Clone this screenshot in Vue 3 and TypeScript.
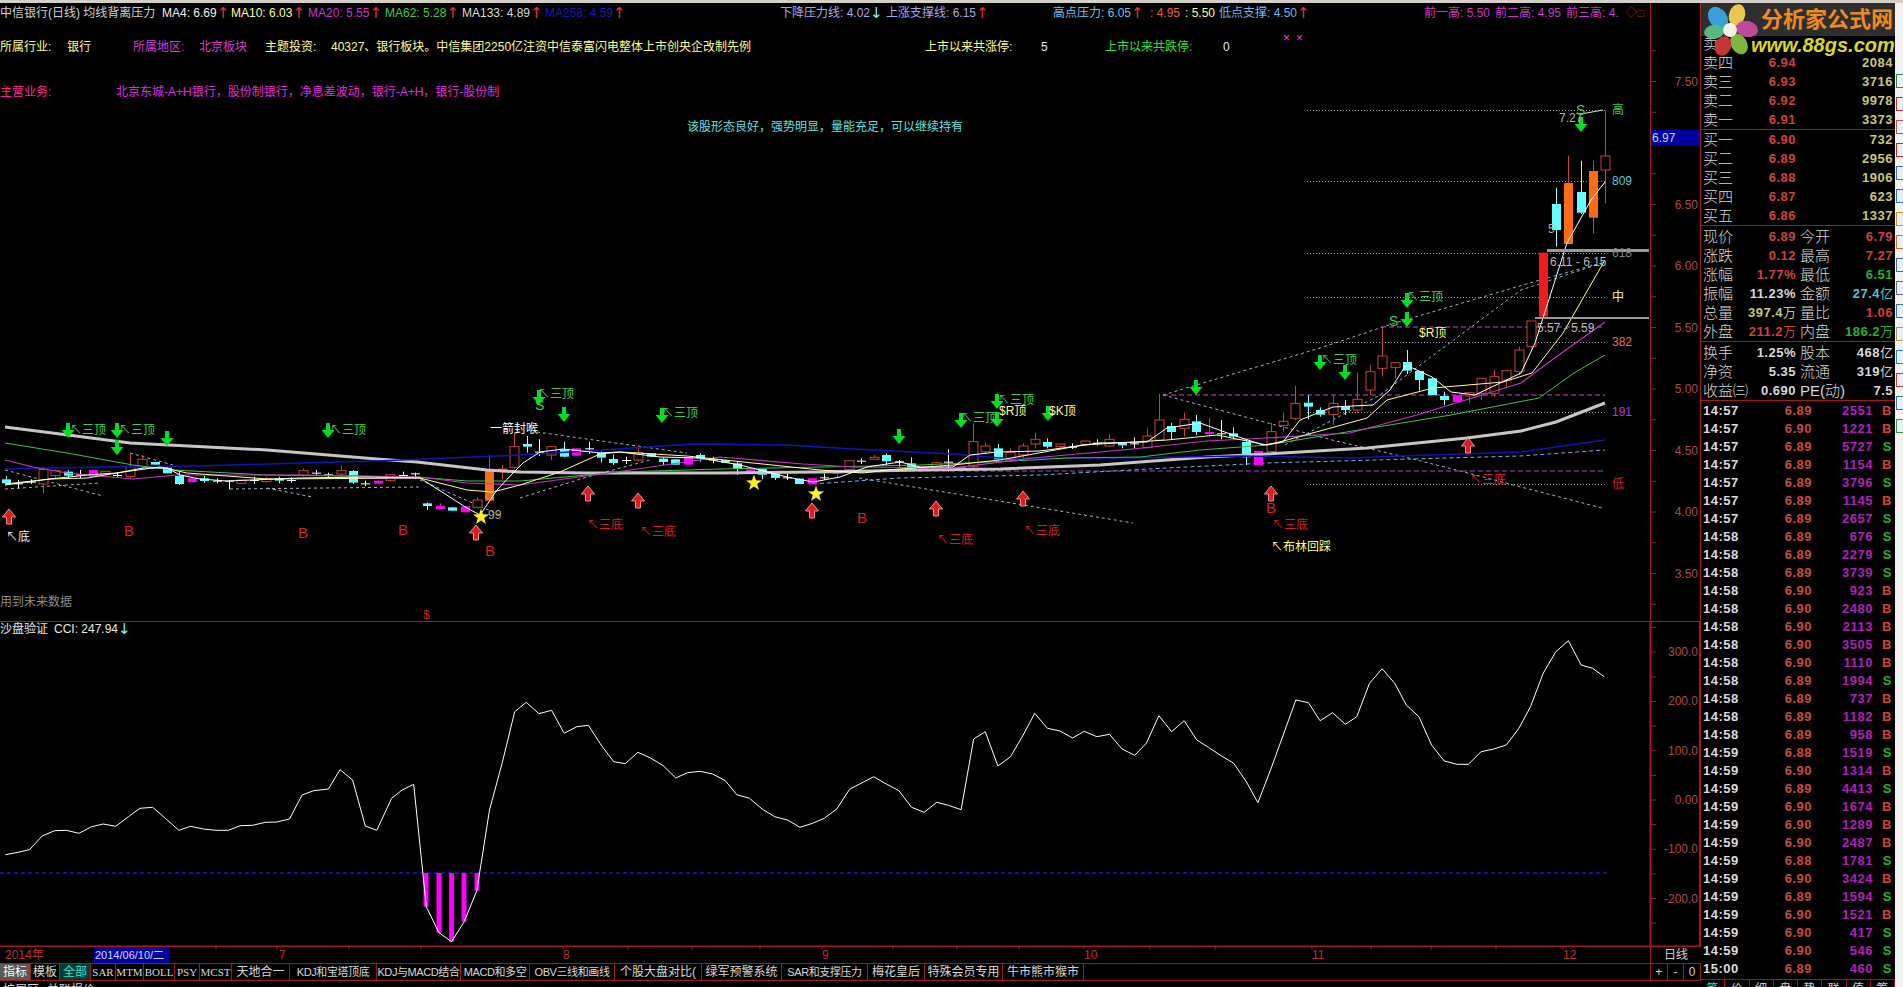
<script setup lang="ts">
type Raw = [string, number, number, number?, number?]

const CJK = '"Liberation Sans", "Noto Sans CJK SC", "DejaVu Sans", sans-serif'

// 蜡烛数据：每组用同一个 y 基准，数值是读图时的 3 倍刻度
const group1: Raw[] = [
  ['d',178,190,168,195],['x',190,190,180,205],['x',185,185,178,192],['u',148,192,140,220],['u',152,167,148,175],
  ['d',155,167,150,175],['x',163,163,150,175],['m',150,170],['u',154,162,154,165],['x',165,165,158,170],
  ['u',140,170,100,175],['u',118,140,105,148],['d',126,134],['d',143,160,138,160],['d',168,192,155,195],
  ['m',175,186],['d',175,183,168,188],['x',182,182,175,190],['x',182,182,180,208],['u',180,190],
  ['x',180,180,170,192],['u',176,185,170,188],['d',176,182,170,190],['x',180,180,172,188],['u',152,166,145,170],
  ['x',158,158,150,165],['x',163,163,158,172],['u',152,162,136,170],['d',153,188,150,192],['x',190,190,182,198],
  ['m',182,191],['u',164,182,162,185],['x',165,165,155,172],['x',160,160,158,175],['d',250,258,247,270],
  ['m',258,267,250,267],['d',262,272],['m',259,277],['u',240,262,232,265],['o',152,242,105,242],
  ['u',147,150,135,178],['u',80,142,40,148],
  ['d',72,80,48,98],['x',95,95,58,108],['u',80,105,78,120],['d',88,110,65,112],['m',85,107],
  ['x',85,85,65,102],['d',98,113,95,128],['d',117,129,103,135],['x',120,120,110,132],['u',98,120,75,125],
  ['d',100,110],['d',116,126,112,135],['d',118,134],['m',113,134],['d',105,115,100,125],
  ['x',118,118,110,130],['d',120,128],['d',130,146,125,165],['m',148,156],['d',147,164,145,178],
  ['d',160,174,155,180],['x',172,172,162,180],['d',176,192],['m',175,193],['x',172,172,160,180],
  ['u',152,160,152,170],['u',122,148],['x',122,122,115,132],['u',112,118,105,118],['d',105,124,100,135],
  ['x',124,124,120,140],['d',130,146,112,148],['m',142,154],['u',128,146],['x',125,125,88,155],
  ['m',140,147],['u',65,140,10,145],['u',78,95,68,100],['d',85,118,72,120],['u',97,118,85,125],
  ['u',78,105,70,120],['u',58,72,38,85],
]
const group2: Raw[] = [
  ['d',186,200,175,205],['u',192,200,192,205],['x',200,200,190,207],['u',183,193],['x',188,188,178,196],
  ['u',178,198,163,200],['d',188,196,188,205],['x',190,190,172,205],['u',168,203,145,205],['u',120,180,42,182],
  ['d',138,156,128,178],['u',118,145,98,170],['d',124,156,105,165],['m',156,162,113,170],['x',160,160,120,178],
  ['d',160,170,142,178],['d',186,232,180,255],['m',213,255],['u',155,215,128,218],['u',124,136,98,155],
  ['u',70,115,18,120],['d',68,80,46,118],['d',90,104,82,110],['u',70,104,45,135],['d',78,90,60,105],
]
const group3: Raw[] = [
  ['u',928,960,848,970],['u',845,900,825,915],['u',798,835,712,860],['u',818,832,818,865],['d',816,842,780,852],
  ['d',843,870,843,902],['d',865,915],['d',918,930,905,945],['m',916,936],['u',908,918,908,940],
  ['u',865,910,865,930],['u',860,910,838,920],['u',842,870,842,890],['u',780,845,770,855],['u',693,770,693,775],
  ['r',488,680],['d',342,420,293,470],['o',279,462,197,462],['d',306,368,212,372],['o',243,383,212,430],
  ['u',198,240,62,340],
]

const bodyColor: Record<string, string> = {
  u: '#000', d: '#66ffff', m: '#ff00ff', o: '#ff6a14', r: '#f01c1c', x: '#fff',
}
const wickColor: Record<string, string> = {
  u: '#c8433a', d: '#9ff', m: '#c8433a', o: '#c8433a', r: '#f01c1c', x: '#fff',
}

const toBars = (list: Raw[], base: number, start: number) =>
  list.map(([t, top, bot, hi, lo], i) => {
    const x = Math.round(5.7 + 12.4 * (start + i)) + 0.5
    const y1 = base + top / 3
    const y2 = base + bot / 3
    const h1 = base + (hi ?? top) / 3
    const h2 = base + (lo ?? bot) / 3
    return {
      key: start + i,
      wick: `M${x} ${h1}V${y1}M${x} ${y2}V${h2}M${x} ${y1}V${y2}`,
      wickColor: wickColor[t],
      x: x - 4.5,
      y: y1,
      w: 9,
      h: t === 'x' ? 1 : Math.max(y2 - y1, 1),
      fill: bodyColor[t],
      stroke: t === 'u' ? '#c8433a' : 'none',
    }
  })

const bars = [...toBars(group1, 420, 0), ...toBars(group2, 380, 84), ...toBars(group3, 90, 109)]

const maLines = [
  { c: '#c6c6c6', w: 3, p: '5,427 68,435 130,443 267,450 377,459 417,462 487,470 520,472 587,473 720,473 820,472 920,470 1000,469 1100,465 1207,457 1267,454 1367,448 1467,438 1521,431 1556,422 1605,403' },
  { c: '#1414b4', w: 1.5, p: '5,469 100,467 200,466 300,463 377,461 520,455 603,450 693,444 787,445 853,449 953,454 1000,458 1127,458 1240,456 1353,458 1400,456 1521,452 1605,440' },
  { c: '#3fc04a', w: 1, p: '5,443 67,453 133,465 173,470 267,475 417,477 467,481 520,481 620,472 720,469 820,467 920,465 1033,460 1067,458 1140,457 1200,450 1267,445 1328,435 1451,415 1539,398 1574,373 1605,355' },
  { c: '#c238c2', w: 1.2, p: '5,460 33,467 67,473 100,476 133,479 177,475 300,475 420,477 467,483 520,485 630,470 720,457 803,464 853,467 953,468 1033,458 1133,449 1207,441 1267,438 1350,433 1417,415 1521,383 1556,357 1605,322' },
  { c: '#ffff9a', w: 1, p: '5,485 50,479 87,478 123,472 160,467 187,473 267,479 420,478 467,490 493,492 520,485 560,472 600,454 620,452 687,456 753,463 820,470 863,473 887,470 953,465 1000,460 1083,445 1167,440 1217,435 1267,445 1287,440 1367,418 1387,400 1433,388 1503,382 1532,373 1563,333 1605,260' },
  { c: '#fff', w: 1, p: '5,484 50,479 87,475 117,473 143,468 167,468 180,475 200,479 227,481 300,478 367,477 420,478 467,508 480,515 497,490 513,473 523,463 540,452 563,449 600,453 620,452 660,457 700,458 740,465 787,477 813,482 840,477 867,467 900,462 920,467 953,467 970,455 997,452 1040,451 1100,443 1147,442 1167,428 1200,423 1233,435 1263,445 1283,442 1300,420 1333,407 1373,405 1390,390 1406,365 1432,377 1451,392 1475,395 1521,373 1535,343 1567,243 1591,200 1605,182' },
]

const dashLines = [
  { c: '#8fb8c8', d: '3 3', p: '1163,395 1320,348 1395,323 1540,280 1605,262' },
  { c: '#8fb8c8', d: '3 3', p: '1285,445 1380,395 1451,342 1521,290 1605,262' },
  { c: '#9cb4c8', d: '3 3', p: '1163,395 1268,423 1332,440 1409,458 1468,473 1521,487 1602,508' },
  { c: '#d040d0', d: '5 3', p: '1163,395 1605,395' },
  { c: '#d040d0', d: '5 3', p: '1381,327 1605,327' },
  { c: '#a848d0', d: '5 3', p: '870,471 1605,471' },
  { c: '#6cb4e4', d: '4 3', p: '813,484 900,478 1040,475 1167,468 1267,463 1520,456 1605,450' },
  { c: '#9cb4c8', d: '3 3', p: '859,478 1133,523' },
  { c: '#9cb4c8', d: '3 3', p: '537,432 687,453' },
  { c: '#9cb4c8', d: '3 3', p: '5,470 103,496' },
  { c: '#9cb4c8', d: '3 3', p: '267,488 312,497' },
  { c: '#9cb4c8', d: '3 3', p: '130,453 173,465' },
  { c: '#9cb4c8', d: '3 3', p: '230,489 420,487' },
  { c: '#9cb4c8', d: '3 3', p: '420,480 500,515' },
  { c: '#9cb4c8', d: '3 3', p: '5,489 100,483' },
  { c: '#9cb4c8', d: '3 3', p: '520,498 587,477 650,460' },
]

const fibY = [110, 181, 253, 297, 342, 412, 484]

const greenArrows = [
  [68,431],[117,431],[117,448],[167,439],[328,431],[539,398],[564,415],[662,416],[899,437],[961,421],
  [997,402],[997,420],[1048,414],[1196,388],[1320,363],[1345,373],[1407,301],[1407,320],[1581,125],
]
const redArrows = [[9,516],[476,532],[588,493],[638,500],[812,510],[936,508],[1023,498],[1271,493],[1468,445]]
const stars = [[754,483],[816,494],[481,517]]

const starPoints = Array.from({ length: 10 }, (_, i) => {
  const r = i % 2 ? 3.4 : 8.5
  const a = (Math.PI / 5) * i - Math.PI / 2
  return `${(r * Math.cos(a)).toFixed(1)},${(r * Math.sin(a)).toFixed(1)}`
}).join(' ')

const GREEN = '#3ad24a'
const RED = '#d82020'
const YELLOW = '#ffff80'
const MAG = '#c838c8'

const chartTexts: { x: number; y: number; t: string; c: string; s?: number; arrow?: string; ac?: string }[] = [
  { x: 0, y: 13, t: '中信银行(日线) 均线背离压力', c: '#d0d0d0' },
  { x: 162, y: 13, t: 'MA4: 6.69', c: '#f0f0f0', arrow: '↑', ac: '#f03030' },
  { x: 231, y: 13, t: 'MA10: 6.03', c: '#ffff9a', arrow: '↑', ac: '#f03030' },
  { x: 308, y: 13, t: 'MA20: 5.55', c: MAG, arrow: '↑', ac: '#f03030' },
  { x: 385, y: 13, t: 'MA62: 5.28', c: '#3fd04a', arrow: '↑', ac: '#f03030' },
  { x: 462, y: 13, t: 'MA133: 4.89', c: '#d8d8d8', arrow: '↑', ac: '#f03030' },
  { x: 545, y: 13, t: 'MA258: 4.59', c: '#1a1ab8', arrow: '↑', ac: '#f03030' },
  { x: 780, y: 13, t: '下降压力线: 4.02', c: '#a8a8e8', arrow: '↓', ac: '#66ffff' },
  { x: 886, y: 13, t: '上涨支撑线: 6.15', c: '#a8a8e8', arrow: '↑', ac: '#f03030' },
  { x: 1053, y: 13, t: '高点压力: 6.05', c: '#6cc4ee', arrow: '↑', ac: '#f03030' },
  { x: 1150, y: 13, t: ': 4.95', c: '#e86048' },
  { x: 1185, y: 13, t: ': 5.50', c: '#ffff9a' },
  { x: 1219, y: 13, t: '低点支撑: 4.50', c: '#78b4f0', arrow: '↑', ac: '#f03030' },
  { x: 1424, y: 13, t: '前一高: 5.50', c: MAG },
  { x: 1495, y: 13, t: '前二高: 4.95', c: MAG },
  { x: 1566, y: 13, t: '前三高: 4.', c: MAG },
  { x: 1625, y: 13, t: '◇', c: '#a02020' },
  { x: 1637, y: 13, t: '□', c: '#a02020' },
  { x: 0, y: 47, t: '所属行业:', c: YELLOW },
  { x: 67, y: 47, t: '银行', c: YELLOW },
  { x: 133, y: 47, t: '所属地区:', c: '#d040d0' },
  { x: 199, y: 47, t: '北京板块', c: '#d040d0' },
  { x: 265, y: 47, t: '主题投资:', c: YELLOW },
  { x: 331, y: 47, t: '40327、银行板块。中信集团2250亿注资中信泰富闪电整体上市创央企改制先例', c: YELLOW },
  { x: 925, y: 47, t: '上市以来共涨停:', c: YELLOW },
  { x: 1041, y: 47, t: '5', c: '#e8e8e8' },
  { x: 1105, y: 47, t: '上市以来共跌停:', c: '#30e040' },
  { x: 1223, y: 47, t: '0', c: '#e8e8e8' },
  { x: 1283, y: 38, t: '×', c: '#e040e0' },
  { x: 1296, y: 38, t: '×', c: '#e040e0' },
  { x: 0, y: 92, t: '主营业务:', c: '#ff2090' },
  { x: 116, y: 92, t: '北京东城-A+H银行，股份制银行，净息差波动，银行-A+H，银行-股份制', c: '#e028e0' },
  { x: 687, y: 127, t: '该股形态良好，强势明显，量能充足，可以继续持有', c: '#60e0e0' },
  { x: 0, y: 602, t: '用到未来数据', c: '#8c8c8c' },
  { x: 1612, y: 110, t: '高', c: '#30d040' },
  { x: 1612, y: 181, t: '809', c: '#60c4d8' },
  { x: 1612, y: 253, t: '618', c: '#888' },
  { x: 1612, y: 297, t: '中', c: YELLOW },
  { x: 1612, y: 342, t: '382', c: '#e07060' },
  { x: 1612, y: 412, t: '191', c: '#a840d0' },
  { x: 1612, y: 484, t: '低', c: RED },
  { x: 1559, y: 118, t: '7.27', c: '#b0b0b0' },
  { x: 1548, y: 229, t: '5', c: '#b0b0b0' },
  { x: 1550, y: 262, t: '6.11 - 6.15', c: '#b8b8b8' },
  { x: 1537, y: 328, t: '5.57 - 5.59', c: '#b8b8b8' },
  { x: 488, y: 515, t: '99', c: '#a8a8a8' },
  { x: 6, y: 537, t: '↖底', c: '#f0f0f0' },
  { x: 490, y: 429, t: '一箭封喉', c: '#ffffff' },
  { x: 1271, y: 547, t: '↖布林回踩', c: YELLOW },
  { x: 999, y: 411, t: '$R顶', c: YELLOW },
  { x: 1049, y: 411, t: '$K顶', c: YELLOW },
  { x: 1419, y: 333, t: '$R顶', c: YELLOW },
  { x: 423, y: 615, t: '$', c: RED },
  { x: 535, y: 405, t: 'S', c: GREEN, s: 14 },
  { x: 1389, y: 321, t: 'S', c: GREEN, s: 14 },
  { x: 1576, y: 110, t: 'S', c: GREEN, s: 14 },
  ...[[70,430],[119,430],[330,430],[538,394],[662,413],[961,418],[998,400],[1321,360],[1407,297]].map(([x, y]) => ({
    x, y, t: '↖三顶', c: GREEN,
  })),
  ...[[587,525],[640,532],[937,540],[1024,531],[1272,525],[1470,480]].map(([x, y]) => ({
    x, y, t: '↖三底', c: RED,
  })),
  ...[[129,530],[303,532],[403,529],[490,550],[862,517],[1271,507]].map(([x, y]) => ({
    x: x - 5, y, t: 'B', c: RED, s: 15,
  })),
]

const priceY = (p: number) => 266 + (6 - p) * 123
const priceTicks = Array.from({ length: 19 }, (_, i) => priceY(3.25 + i * 0.25))
const priceLabels = ['7.50', '6.50', '6.00', '5.50', '5.00', '4.50', '4.00', '3.50'].map(t => ({ t, y: priceY(Number(t)) }))

const cciY = (v: number) => 800 - v * 0.493
const cciTicks = Array.from({ length: 13 }, (_, i) => cciY(-250 + i * 50))
const cciLabels = [
  { t: '300.0', y: cciY(300) }, { t: '200.0', y: cciY(200) }, { t: '100.0', y: cciY(100) },
  { t: '0.00', y: cciY(0) }, { t: '-100.0', y: cciY(-100) }, { t: '-200.0', y: cciY(-200) },
]

const cciRaw = [
  5,704,17,697,28,689,40,648,52,632,63,631,75,640,87,620,98,612,110,619,122,590,133,565,145,562,157,595,170,631,181,619,
  193,627,205,631,217,631,228,617,240,616,252,607,263,606,275,597,287,525,298,512,312,507,323,449,335,480,347,618,358,631,
  372,535,382,510,393,493,405,860,417,938,429,965,441,905,453,812,465,570,477,430,489,275,500,247,512,281,524,271,536,340,
  548,320,559,316,571,375,583,425,594,431,606,397,618,414,630,437,642,474,653,458,665,454,677,462,689,482,700,524,712,535,
  724,567,736,590,748,600,760,622,772,610,783,595,795,567,807,508,818,490,830,470,842,492,854,512,866,562,878,577,890,547,
  901,556,913,569,925,357,936,335,948,438,960,410,972,345,983,280,995,325,1007,333,1019,354,1030,334,1042,350,1054,343,
  1066,387,1078,406,1089,370,1101,287,1113,335,1125,302,1137,360,1148,382,1160,407,1172,430,1184,485,1195,548,1207,450,
  1219,345,1231,240,1243,248,1254,302,1266,278,1278,313,1289,290,1301,190,1313,146,1325,190,1336,255,1348,290,1360,375,
  1372,423,1384,433,1395,433,1407,395,1419,387,1431,375,1443,325,1454,260,1466,160,1478,95,1490,62,1502,135,1513,145,1524,170,
]
const cciPoints = cciRaw
  .reduce<string[]>((acc, v, i) => {
    if (i % 2) acc.push(`${(cciRaw[i - 1] / 0.95).toFixed(1)},${(620 + v / 3).toFixed(1)}`)
    return acc
  }, [])
  .join(' ')

const cciBars = [
  [426, 860], [439, 938], [451.6, 965], [464, 905], [477, 812],
].map(([x, py]) => ({ x: x - 2.5, y: 873, h: 620 + py / 3 - 873 }))

const dateMarks = [
  { x: 279, t: '7' }, { x: 563, t: '8' }, { x: 822, t: '9' }, { x: 1084, t: '10' }, { x: 1312, t: '11' }, { x: 1563, t: '12' },
]
const dateTicks = [216, 277, 349, 421, 563, 628, 692, 760, 822, 893, 957, 1019, 1084, 1150, 1215, 1312, 1371, 1431, 1496, 1563]

const tabs = [
  { t: '指标', w: 31, cls: 'active' }, { t: '模板', w: 29 }, { t: '全部', w: 31, cls: 'all' },
  { t: 'SAR', w: 25, cls: 'small' }, { t: 'MTM', w: 28, cls: 'small' }, { t: 'BOLL', w: 31, cls: 'small' },
  { t: 'PSY', w: 25, cls: 'small' }, { t: 'MCST', w: 32, cls: 'small' }, { t: '天地合一', w: 58 },
  { t: 'KDJ和宝塔顶底', w: 87, cls: 'mixed' }, { t: 'KDJ与MACD结合', w: 84, cls: 'mixed' }, { t: 'MACD和多空', w: 69, cls: 'mixed' },
  { t: 'OBV三线和画线', w: 85, cls: 'mixed' }, { t: '个股大盘对比(', w: 87 }, { t: '绿军预警系统', w: 80 },
  { t: 'SAR和支撑压力', w: 86, cls: 'mixed' }, { t: '梅花皇后', w: 57 }, { t: '特殊会员专用', w: 78 }, { t: '牛市熊市猴市', w: 81 },
]

const sellRows = [
  ['卖四', '6.94', '2084'], ['卖三', '6.93', '3716'], ['卖二', '6.92', '9978'], ['卖一', '6.91', '3373'],
]
const buyRows = [
  ['买一', '6.90', '732'], ['买二', '6.89', '2956'], ['买三', '6.88', '1906'], ['买四', '6.87', '623'], ['买五', '6.86', '1337'],
]
const statRows = [
  { a: '现价', v: '6.89', vc: 'red', b: '今开', w: '6.79', wc: 'red' },
  { a: '涨跌', v: '0.12', vc: 'red', b: '最高', w: '7.27', wc: 'red' },
  { a: '涨幅', v: '1.77%', vc: 'red', b: '最低', w: '6.51', wc: 'green' },
  { a: '振幅', v: '11.23%', vc: 'white', b: '金额', w: '27.4', wu: '亿', wc: 'cyan' },
  { a: '总量', v: '397.4', vu: '万', vc: 'olive', b: '量比', w: '1.06', wc: 'red' },
  { a: '外盘', v: '211.2', vu: '万', vc: 'red', b: '内盘', w: '186.2', wu: '万', wc: 'green' },
]
const finRows = [
  { a: '换手', v: '1.25%', b: '股本', w: '468', wu: '亿' },
  { a: '净资', v: '5.35', b: '流通', w: '319', wu: '亿' },
  { a: '收益㈢', v: '0.690', b: 'PE(动)', w: '7.5' },
]

const trades = `14:57 6.89 2551 B,14:57 6.90 1221 B,14:57 6.89 5727 S,14:57 6.89 1154 B,14:57 6.89 3796 S,14:57 6.89 1145 B,14:57 6.89 2657 S,14:58 6.89 676 S,14:58 6.89 2279 S,14:58 6.89 3739 S,14:58 6.90 923 B,14:58 6.90 2480 B,14:58 6.90 2113 B,14:58 6.90 3505 B,14:58 6.90 1110 B,14:58 6.89 1994 S,14:58 6.89 737 B,14:58 6.89 1182 B,14:58 6.89 958 B,14:59 6.88 1519 S,14:59 6.90 1314 B,14:59 6.89 4413 S,14:59 6.90 1674 B,14:59 6.90 1289 B,14:59 6.90 2487 B,14:59 6.88 1781 S,14:59 6.90 3424 B,14:59 6.89 1594 S,14:59 6.90 1521 B,14:59 6.90 417 S,14:59 6.90 546 S,15:00 6.89 460 S`
  .split(',')
  .map(s => s.split(' '))

const panelTabs = ['笔', '价', '细', '盘', '势', '联', '值', '筹']
const toolIcons = ['#2a8a3a', '#c03030', '#c05040', '#d02020', '#4070b0', '#3070b0', '#d09030', '#d07030', '#3070b0', '#607080', '#3070c0', '#b09060', '#3080d0', '#c04030', '#3070b0', '#30a040']
</script>

<template>
  <div class="screen">
    <div class="top-bar"></div>

    <div class="left">
      <!-- 主图 -->
      <svg class="chart main-chart" viewBox="0 3 1701 618" width="1701" height="618">
        <line v-for="y in fibY" :key="y" x1="1307" x2="1605" :y1="y + 0.5" :y2="y + 0.5" stroke="#9a9a9a" stroke-dasharray="1 2" />
        <polyline v-for="(l, i) in dashLines" :key="i" :points="l.p" fill="none" :stroke="l.c" :stroke-dasharray="l.d" />

        <g v-for="b in bars" :key="b.key">
          <path :d="b.wick" :stroke="b.wickColor" fill="none" />
          <rect :x="b.x" :y="b.y" :width="b.w" :height="b.h" :fill="b.fill" :stroke="b.stroke" />
        </g>

        <polyline v-for="(l, i) in maLines" :key="i" :points="l.p" fill="none" :stroke="l.c" :stroke-width="l.w" />

        <rect x="1547" y="249" width="102" height="3" fill="#999" />
        <rect x="1535" y="317" width="114" height="2" fill="#999" />
        <line x1="1581" y1="114" x2="1603" y2="110" stroke="#ddd" />

        <path
          v-for="(a, i) in greenArrows" :key="i"
          :transform="`translate(${a[0]} ${a[1]})`"
          d="M-2 -8h4v7h4.500L0 7-6.500 -1H-2z"
          fill="#00e020"
        />
        <path
          v-for="(a, i) in redArrows" :key="i"
          :transform="`translate(${a[0]} ${a[1]})`"
          d="M-2.500 8h5v-7h4L0 -7-6.500 1h4z"
          fill="#e01c1c" stroke="#f09090"
        />
        <polygon
          v-for="(s, i) in stars" :key="i"
          :transform="`translate(${s[0]} ${s[1]})`"
          :points="starPoints"
          fill="#ffee20"
        />

        <text
          v-for="(t, i) in chartTexts" :key="i"
          class="chart-text" :x="t.x" :y="t.y" :fill="t.c" :font-size="t.s ?? 12" dominant-baseline="central" :font-family="CJK"
        >{{ t.t }}<tspan v-if="t.arrow" class="head-arrow" :fill="t.ac">{{ t.arrow }}</tspan></text>

        <line x1="1650.5" x2="1650.5" y1="3" y2="621" class="axis-line" />
        <line x1="1700.5" x2="1700.5" y1="3" y2="621" class="axis-line" />
        <line v-for="y in priceTicks" :key="y" x1="1650" x2="1656" :y1="y" :y2="y" class="axis-line" />
        <text
          v-for="l in priceLabels" :key="l.t"
          class="axis-text" x="1698" :y="l.y" text-anchor="end" dominant-baseline="central"
        >{{ l.t }}</text>
        <rect x="1651" y="130" width="49" height="16" fill="#0000a0" />
        <text x="1652" y="138" class="cur-price" dominant-baseline="central">6.97</text>
      </svg>

      <!-- 副图 CCI -->
      <svg class="chart" viewBox="0 621 1701 326" width="1701" height="326">
        <line x1="0" x2="1700" y1="621" y2="621" class="panel-line" />
        <line x1="0" x2="1700" y1="946.500" y2="946.500" class="panel-line" />
        <line x1="1650.500" x2="1650.500" y1="621" y2="947" class="panel-line" />
        <line x1="1700" x2="1700" y1="621" y2="947" class="panel-line" />
        <line x1="0" x2="1610" y1="873" y2="873" stroke="#1818d0" stroke-width="1.500" stroke-dasharray="4 3" />
        <rect v-for="b in cciBars" :key="b.x" :x="b.x" :y="b.y" width="5" :height="b.h" fill="#ff00ff" />
        <polyline :points="cciPoints" fill="none" stroke="#fff" />
        <text class="chart-text" x="0" y="629" fill="#e8e8e8" font-size="12" dominant-baseline="central" :font-family="CJK">沙盘验证</text>
        <text class="chart-text" x="54" y="629" fill="#e8e8e8" font-size="12" dominant-baseline="central" :font-family="CJK">CCI: 247.94<tspan class="head-arrow" fill="#66ffff">↓</tspan></text>
        <line v-for="y in cciTicks" :key="y" x1="1650" x2="1656" :y1="y" :y2="y" class="axis-line" />
        <text
          v-for="l in cciLabels" :key="l.t"
          class="axis-text" x="1698" :y="l.y" text-anchor="end" dominant-baseline="central"
        >{{ l.t }}</text>
      </svg>

      <!-- 时间轴 -->
      <div class="date-row">
        <svg class="chart" viewBox="0 0 1650 16" width="1650" height="16">
          <text class="date-text" x="5" y="8" dominant-baseline="central" :font-family="CJK">2014年</text>
          <line v-for="x in dateTicks" :key="x" :x1="x" :x2="x" y1="0" y2="3" class="axis-line" />
          <rect x="94" y="0" width="76" height="16" fill="#0000a0" />
          <text x="95" y="8" class="date-cur" dominant-baseline="central" :font-family="CJK">2014/06/10/二</text>
          <text
            v-for="m in dateMarks" :key="m.t"
            class="date-text" :x="m.x" y="8" dominant-baseline="central"
          >{{ m.t }}</text>
        </svg>
        <div class="period">日线</div>
      </div>

      <div class="tab-row">
        <div class="tabs">
          <div
            v-for="t in tabs" :key="t.t"
            class="tab" :class="t.cls"
            :style="{ width: t.w + 'px' }"
          >{{ t.t }}</div>
        </div>
        <div class="zoom-btns">
          <span>+</span><span>-</span><span>0</span>
        </div>
      </div>

      <div class="extra-row">
        <span>扩展区</span><span>关联报价</span>
      </div>
    </div>

    <!-- 右侧盘口 -->
    <div class="panel">
      <div class="logo">
        <svg class="logo-flower" viewBox="0 0 56 54" width="56" height="54">
          <ellipse cx="15" cy="15" rx="9" ry="12" fill="#3a9ed8" transform="rotate(-35 15 15)" />
          <ellipse cx="34" cy="12" rx="8" ry="11" fill="#e8c850" transform="rotate(15 34 12)" />
          <ellipse cx="44" cy="26" rx="11" ry="8" fill="#c04a9a" transform="rotate(10 44 26)" />
          <ellipse cx="36" cy="41" rx="8" ry="11" fill="#7cb840" transform="rotate(-30 36 41)" />
          <ellipse cx="20" cy="43" rx="8" ry="10" fill="#c83434" transform="rotate(20 20 43)" />
          <ellipse cx="11" cy="29" rx="10" ry="7" fill="#58b880" transform="rotate(-5 11 29)" />
          <circle cx="27" cy="27" r="7" fill="#f4f4e8" />
        </svg>
        <div class="logo-band">
          <span class="logo-name">分析家公式网</span>
        </div>
        <div class="logo-url">www.88gs.com</div>
      </div>

      <div class="block sell">
        <div class="q-row hidden-row"><span class="lb">卖</span></div>
        <div v-for="r in sellRows" :key="r[0]" class="q-row">
          <span class="lb">{{ r[0] }}</span><span class="val red">{{ r[1] }}</span>
          <span class="lb2"></span><span class="val olive">{{ r[2] }}</span>
        </div>
      </div>
      <div class="block">
        <div v-for="r in buyRows" :key="r[0]" class="q-row">
          <span class="lb">{{ r[0] }}</span><span class="val red">{{ r[1] }}</span>
          <span class="lb2"></span><span class="val olive">{{ r[2] }}</span>
        </div>
      </div>
      <div class="block pad">
        <div v-for="r in statRows" :key="r.a" class="q-row">
          <span class="lb">{{ r.a }}</span>
          <span class="val" :class="r.vc">{{ r.v }}<i v-if="r.vu" class="unit">{{ r.vu }}</i></span>
          <span class="lb2">{{ r.b }}</span>
          <span class="val" :class="r.wc">{{ r.w }}<i v-if="r.wu" class="unit">{{ r.wu }}</i></span>
        </div>
      </div>
      <div class="block pad">
        <div v-for="r in finRows" :key="r.a" class="q-row">
          <span class="lb">{{ r.a }}</span>
          <span class="val white">{{ r.v }}</span>
          <span class="lb2">{{ r.b }}</span>
          <span class="val white">{{ r.w }}<i v-if="r.wu" class="unit">{{ r.wu }}</i></span>
        </div>
      </div>
      <div class="trades">
        <div v-for="(r, i) in trades" :key="i" class="t-row">
          <span class="t-time">{{ r[0] }}</span>
          <span class="t-price">{{ r[1] }}</span>
          <span class="t-vol">{{ r[2] }}</span>
          <span class="t-side" :class="r[3] === 'B' ? 'red' : 'green'">{{ r[3] }}</span>
        </div>
      </div>
      <div class="panel-tabs">
        <span v-for="(t, i) in panelTabs" :key="t" :class="{ on: i === 0 }">{{ t }}</span>
      </div>
    </div>

    <div class="strip">
      <i v-for="(c, i) in toolIcons" :key="i" class="tool" :style="{ borderColor: c }"></i>
    </div>
  </div>
</template>

<style scoped>
.screen {
  width: 1903px;
  height: 987px;
  overflow: hidden;
  background: #000;
  display: grid;
  grid-template-columns: 1701px 194px 8px;
  grid-template-rows: 3px 984px;
  font-family: "Liberation Sans", "Noto Sans CJK SC", sans-serif;
}

.top-bar {
  grid-column: 1 / 4;
  background: #d4d0c8;
}

.left {
  display: flex;
  flex-direction: column;
  overflow: hidden;
}

.chart {
  display: block;
  flex: none;
}

.head-arrow {
  font-family: "DejaVu Sans", sans-serif;
  font-size: 15px;
}

.axis-line {
  stroke: #a01c1c;
  stroke-width: 1;
}

.panel-line {
  stroke: #a81818;
  stroke-width: 2;
}

.axis-text {
  font-family: "Liberation Sans", sans-serif;
  font-size: 12px;
  fill: #b04848;
}

.cur-price {
  font-family: "Liberation Sans", sans-serif;
  font-size: 12px;
  fill: #c8d4ff;
}

.date-row {
  display: flex;
  height: 16px;
  border-bottom: 1px solid #a01818;
}

.date-text {
  font-family: "Liberation Sans", "Noto Sans CJK SC", sans-serif;
  font-size: 12px;
  fill: #c03030;
}

.date-cur {
  font-size: 11px;
  fill: #d8d8ff;
}

.period {
  width: 50px;
  border-left: 1px solid #a01818;
  color: #d0d0d0;
  font-size: 12px;
  line-height: 16px;
  text-align: center;
}

.tab-row {
  display: flex;
  justify-content: space-between;
  height: 17px;
  border-bottom: 1px solid #a01818;
  box-sizing: border-box;
}

.tabs {
  display: flex;
}

.tab {
  box-sizing: border-box;
  border-right: 1px solid #a01818;
  color: #d8d8d8;
  font-size: 12px;
  line-height: 16px;
  text-align: center;
  white-space: nowrap;
  overflow: hidden;
}

.tab.active {
  background: #585858;
  color: #fff;
}

.tab.all {
  background: #003c3c;
  color: #40e0c0;
}

.tab.small {
  font-family: "Liberation Serif", serif;
  font-size: 11px;
}

.tab.mixed {
  font-size: 11px;
  letter-spacing: -0.4px;
}

.zoom-btns {
  display: flex;
  width: 50px;
  border-left: 1px solid #a01818;
}

.zoom-btns span {
  flex: 1;
  border-right: 1px solid #a01818;
  color: #d0d0d0;
  font-size: 12px;
  line-height: 16px;
  text-align: center;
}

.extra-row {
  display: flex;
  gap: 8px;
  padding: 1px 0 0 3px;
  color: #d0d0d0;
  font-size: 12px;
  line-height: 16px;
}

.panel {
  position: relative;
  overflow: hidden;
  padding-top: 31px;
  box-sizing: border-box;
}

.logo {
  position: absolute;
  top: 0;
  left: 0;
  width: 194px;
  height: 51px;
}

.logo-flower {
  position: absolute;
  top: 0;
  left: 2px;
}

.logo-band {
  height: 33px;
  background: #2e2e2e;
  display: flex;
  justify-content: flex-end;
  align-items: center;
  padding-right: 2px;
}

.logo-name {
  color: #f08a20;
  font-size: 22px;
  font-weight: 700;
  line-height: 1;
}

.logo-url {
  margin-left: 50px;
  height: 18px;
  background: #000;
  color: #d8d820;
  font-size: 20px;
  font-style: italic;
  font-weight: 700;
  line-height: 18px;
  text-align: right;
  padding-right: 2px;
}

.block {
  border-bottom: 1px solid #a81818;
}

.block.pad {
  padding-top: 1px;
}

.q-row {
  display: flex;
  height: 19px;
  line-height: 19px;
  padding-left: 2px;
}

.lb,
.lb2 {
  flex: none;
  width: 32px;
  color: #d8d8d8;
  font-size: 15px;
  font-weight: 300;
  white-space: nowrap;
}

.lb2 {
  margin-left: 4px;
}

.val {
  flex: none;
  width: 61px;
  text-align: right;
  font-size: 13px;
  font-weight: 700;
  letter-spacing: 0.5px;
  white-space: nowrap;
}

.unit {
  font-style: normal;
  font-weight: 400;
  font-size: 13px;
  letter-spacing: 0;
}

.red { color: #d04040; }
.green { color: #28b030; }
.olive { color: #c8c870; }
.white { color: #d8d8d8; }
.cyan { color: #50c4d8; }

.trades {
  padding-top: 1px;
}

.t-row {
  display: flex;
  height: 18px;
  line-height: 18px;
  padding-left: 2px;
  font-size: 13px;
  font-weight: 700;
  letter-spacing: 0.5px;
}

.t-time {
  width: 40px;
  color: #dcdcdc;
}

.t-price {
  width: 69px;
  text-align: right;
  color: #d04840;
}

.t-vol {
  width: 61px;
  text-align: right;
  color: #b020b8;
}

.t-side {
  width: 19px;
  text-align: right;
}

.panel-tabs {
  display: flex;
  border-top: 1px solid #a01818;
  margin-top: 1px;
  color: #d0d0d0;
  font-size: 12px;
  line-height: 16px;
}

.panel-tabs span {
  width: 24px;
  text-align: center;
  border-right: 1px solid #a01818;
  padding-top: 1px;
}

.panel-tabs .on {
  color: #40e0c0;
}

.strip {
  background: #f2f2f0;
  display: flex;
  flex-direction: column;
  gap: 9px;
  padding-top: 71px;
  overflow: hidden;
}

.tool {
  flex: none;
  width: 14px;
  height: 14px;
  margin-left: 1px;
  border: 1px solid #3070b0;
  box-sizing: border-box;
  background: #e8f0f8;
}
</style>

<style>
body {
  background: #000;
}
</style>
